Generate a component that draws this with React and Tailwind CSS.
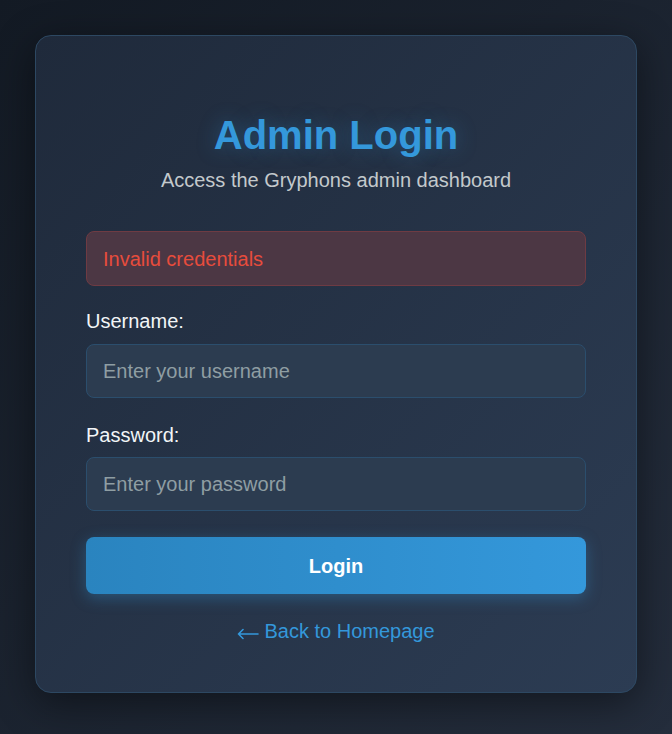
import React from "react";

export default function App() {
  return (
    <div
      className="w-full min-h-[734px] flex justify-center pt-[35px] pb-[41px] bg-gradient-to-br from-[#131a24] to-[#242d3c]"
      style={{ fontFamily: '"Liberation Sans", Arial, sans-serif' }}
    >
      <div className="w-[602px] h-[658px] rounded-2xl border border-[#2d4862] bg-gradient-to-br from-[#1f2a3b] to-[#2c3c53] shadow-[0_10px_40px_rgba(0,0,0,0.45)] px-[50px] pt-[76px] flex flex-col">
        <h1 className="text-[40px] leading-[46px] font-bold text-center text-[#3498db] [text-shadow:0_0_20px_rgba(52,152,219,0.35)]">
          Admin Login
        </h1>
        <p className="mt-[11px] text-[20px] leading-[23px] text-center text-[#c3c9cc]">
          Access the Gryphons admin dashboard
        </p>

        <div className="mt-[39px] h-[55px] rounded-lg border border-[#6e3b43] bg-[#4c3744] flex items-center px-4 text-[20px] text-[#e74c3c]">
          Invalid credentials
        </div>

        <label className="mt-[24px] block text-[20px] leading-[23px] text-[#f2f5f7]">
          Username:
        </label>
        <input
          type="text"
          placeholder="Enter your username"
          className="mt-[11px] h-[54px] w-full rounded-lg border border-[#2b4e6d] bg-[#2c3c50] px-4 text-[20px] text-white placeholder:text-[#8f9ea3] outline-none"
        />

        <label className="mt-[26px] block text-[20px] leading-[23px] text-[#f2f5f7]">
          Password:
        </label>
        <input
          type="password"
          placeholder="Enter your password"
          className="mt-[10px] h-[54px] w-full rounded-lg border border-[#2b4e6d] bg-[#2c3c50] px-4 text-[20px] text-white placeholder:text-[#8f9ea3] outline-none"
        />

        <button className="mt-[26px] h-[57px] w-full rounded-lg bg-gradient-to-r from-[#2a84bf] to-[#3498db] text-white font-bold text-[20px] shadow-[0_4px_15px_rgba(52,152,219,0.35)]">
          Login
        </button>

        <a href="#" className="mt-[26px] flex items-center justify-center gap-[5px] text-[20px] leading-[23px] text-[#3498db]">
          <svg width="22" height="12" viewBox="0 0 22 12" className="mt-[4px]" fill="none" stroke="#3498db" strokeWidth="1.6" strokeLinecap="round" strokeLinejoin="round">
            <path d="M21 6H1.5M6 1.5L1.5 6L6 10.5" />
          </svg>
          <span>Back to Homepage</span>
        </a>
      </div>
    </div>
  );
}
